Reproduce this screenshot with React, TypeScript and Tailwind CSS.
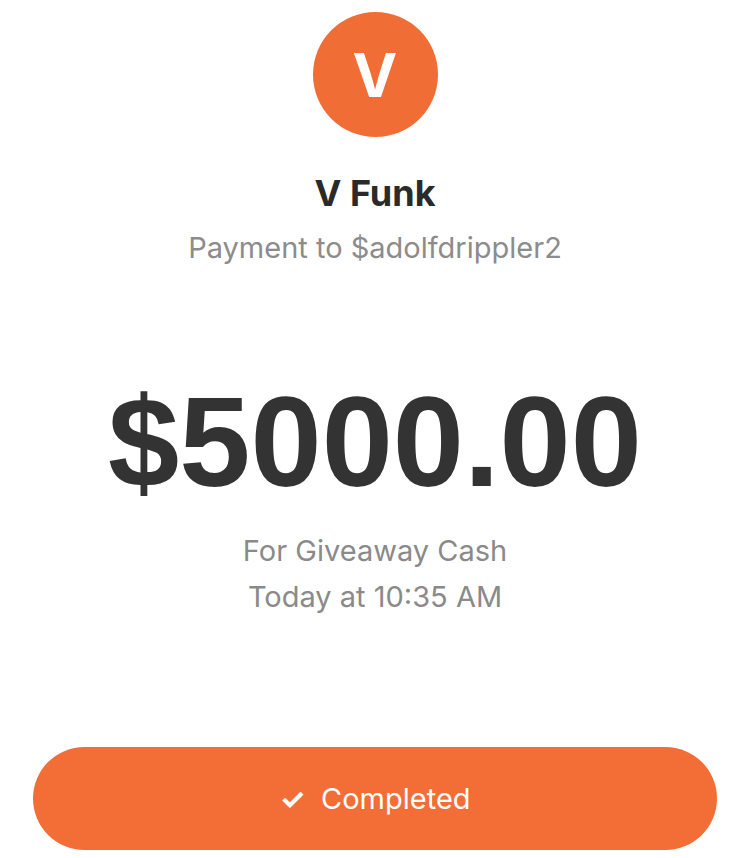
export default function App() {
  return (
    <div
      className="w-[750px] h-[858px] bg-white flex flex-col items-center overflow-hidden"
      style={{ fontFamily: "Inter, 'Liberation Sans', sans-serif" }}
    >
      <div className="mt-[12px] w-[125px] h-[125px] rounded-full bg-[#f06d35] flex items-center justify-center">
        <span className="text-white text-[60px] font-bold leading-none">V</span>
      </div>

      <div className="mt-[38px] text-[36px] font-bold text-[#2a2a2a] leading-none">V Funk</div>
      <div className="mt-[22px] text-[29px] text-[#8c8c8c] leading-none">Payment to $adolfdrippler2</div>

      <div className="mt-[116px] text-[128px] font-bold text-[#333333] leading-none font-['Liberation_Sans',sans-serif]">
        $5000.00
      </div>

      <div className="mt-[22px] text-[29px] text-[#8a8a8a] leading-[46px] flex flex-col items-center">
        <span>For Giveaway Cash</span>
        <span>Today at 10:35 AM</span>
      </div>

      <button className="mt-auto mb-[8px] w-[684px] h-[103px] rounded-full bg-[#f26e36] text-white text-[29px] flex items-center justify-center gap-4">
        <span className="font-bold">✓</span>
        <span>Completed</span>
      </button>
    </div>
  );
}
